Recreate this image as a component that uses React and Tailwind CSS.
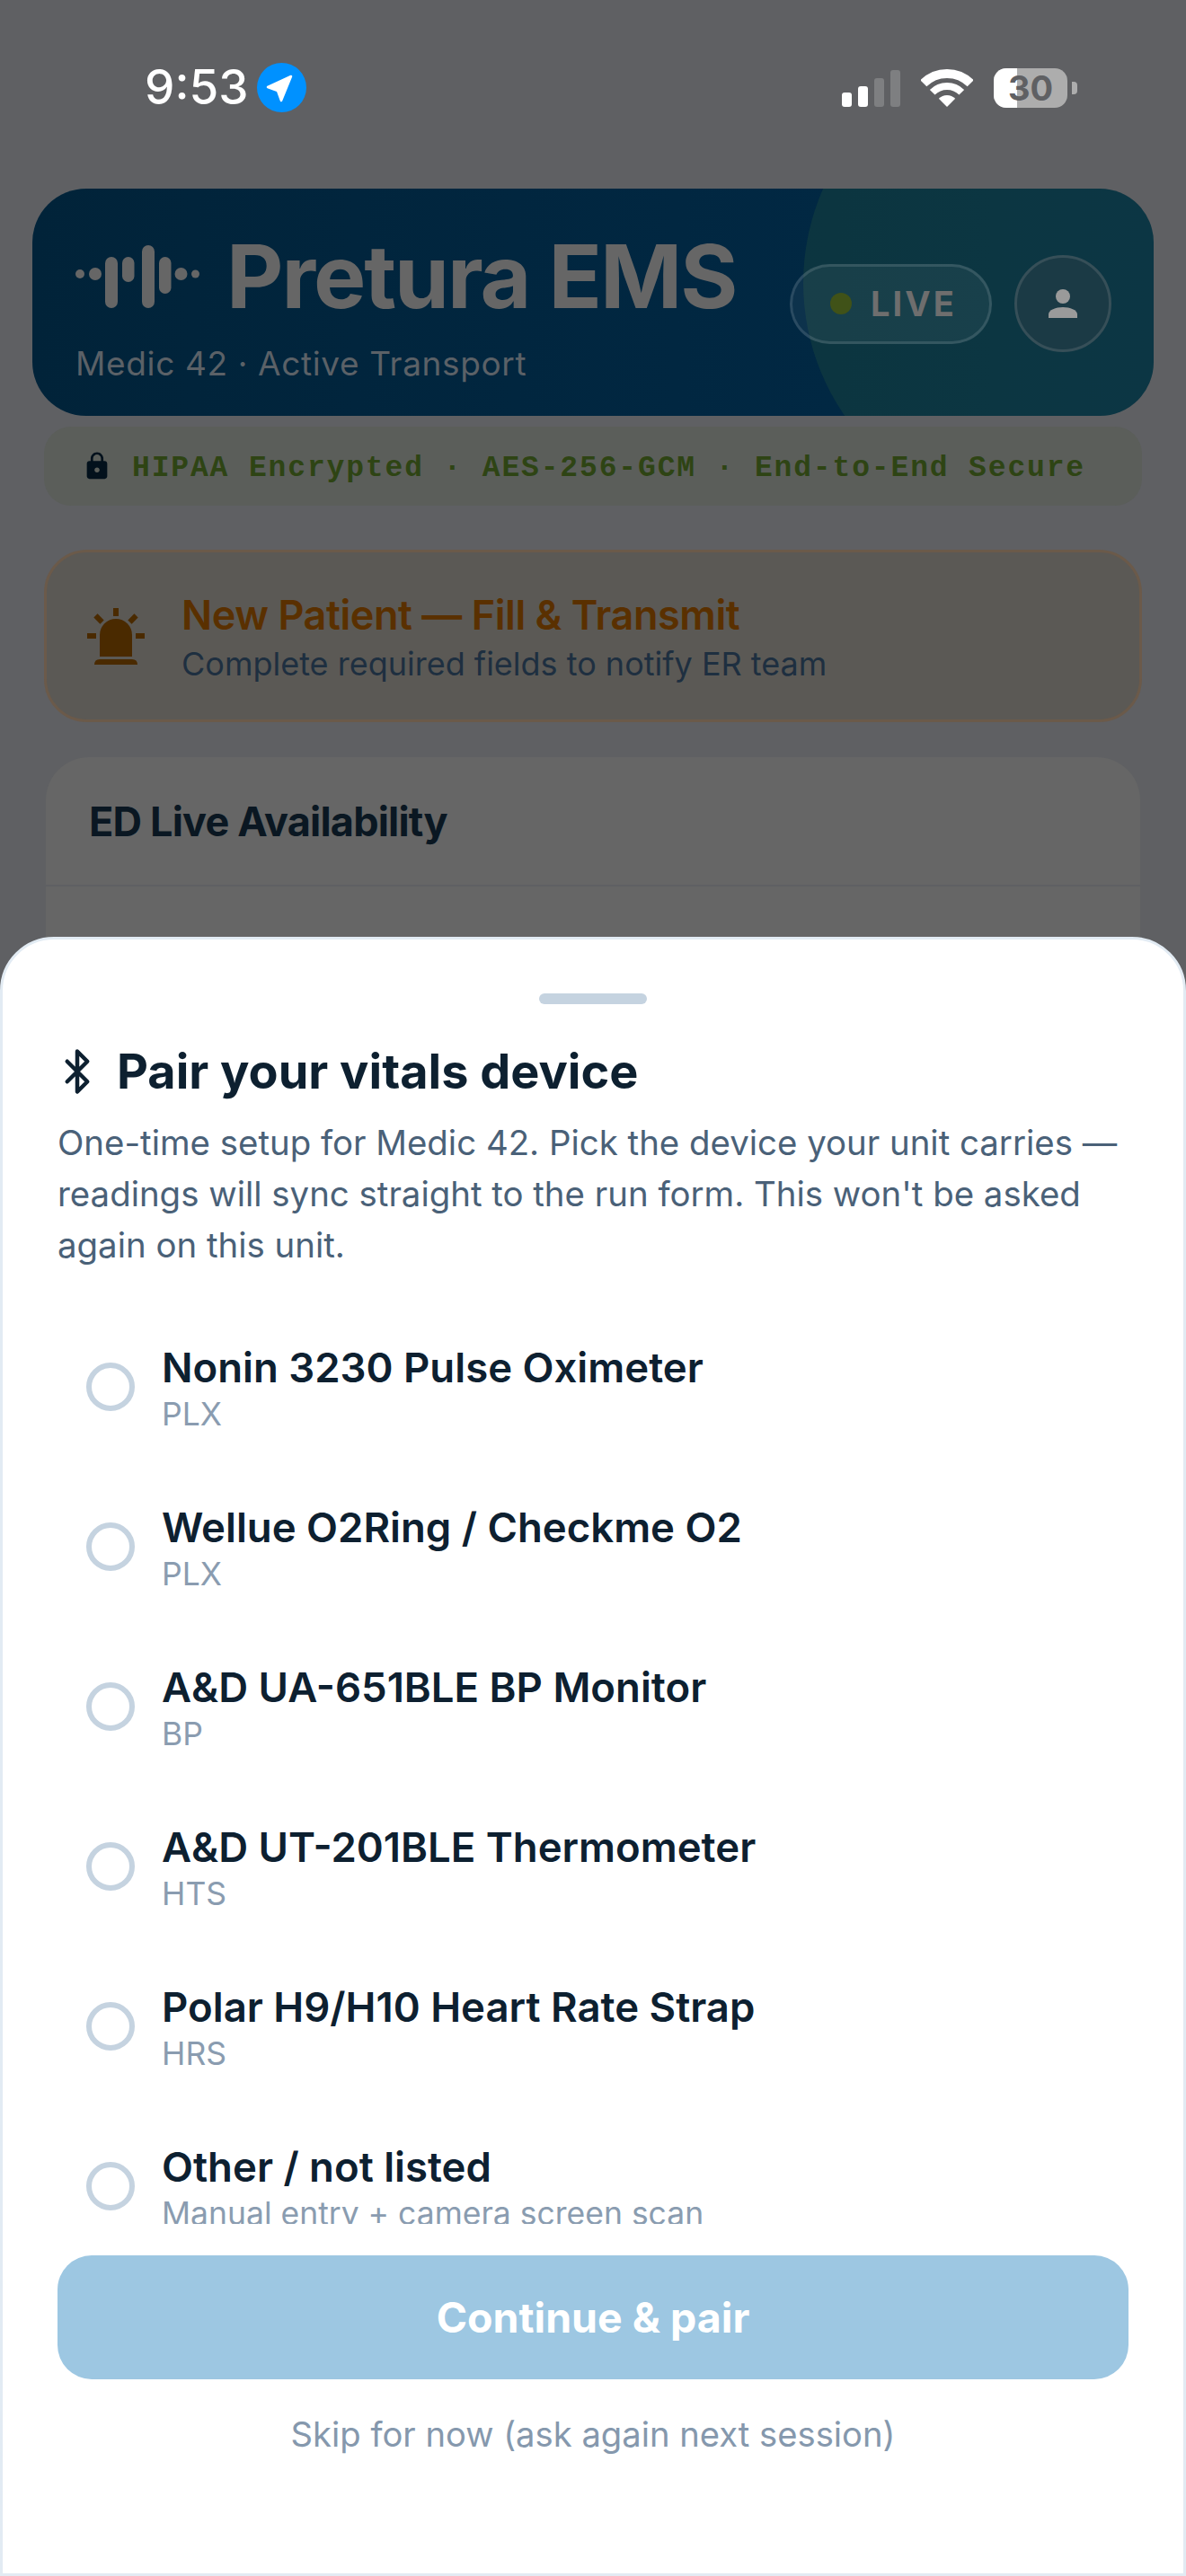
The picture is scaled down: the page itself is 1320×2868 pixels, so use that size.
import React from "react";
import { Bluetooth } from "lucide-react";

const devices = [
  ["Nonin 3230 Pulse Oximeter", "PLX"],
  ["Wellue O2Ring / Checkme O2", "PLX"],
  ["A&D UA-651BLE BP Monitor", "BP"],
  ["A&D UT-201BLE Thermometer", "HTS"],
  ["Polar H9/H10 Heart Rate Strap", "HRS"],
  ["Other / not listed", "Manual entry + camera screen scan"],
];

function StatusBar() {
  return (
    <div className="h-[210px] pt-[70px] pl-[161px] pr-[121px] flex items-start justify-between">
      <div className="flex items-center h-[55px] gap-[10px]">
        <span className="text-[53px] leading-[55px] font-medium text-white">9:53</span>
        <svg width="55" height="55" viewBox="0 0 55 55">
          <circle cx="27.5" cy="27.5" r="27.5" fill="#0091ff" />
          <path d="M12 27 L38 15 L27 42 L23 31 Z" fill="#fff" stroke="#fff" strokeWidth="2.5" strokeLinejoin="round" />
        </svg>
      </div>
      <div className="flex items-center h-[55px] gap-[23px]">
        <div className="flex items-end gap-[7px] h-[41px] mt-[2px]">
          <div className="w-[11px] h-[16px] rounded-[3px] bg-white" />
          <div className="w-[11px] h-[23px] rounded-[3px] bg-white" />
          <div className="w-[11px] h-[32px] rounded-[3px] bg-[#7e7f81]" />
          <div className="w-[11px] h-[41px] rounded-[3px] bg-[#7e7f81]" />
        </div>
        <svg width="58" height="43" viewBox="0 0 58 43" fill="none" stroke="#fff">
          <path d="M2.8 16.8 A37 37 0 0 1 55.2 16.8" strokeWidth="10" />
          <path d="M12.7 26.7 A23 23 0 0 1 45.3 26.7" strokeWidth="8" />
          <path d="M29 43 L19.8 33.8 A13 13 0 0 1 38.2 33.8 Z" fill="#fff" stroke="none" />
        </svg>
        <div className="flex items-center gap-[5px]">
          <div className="relative w-[82px] h-[44px] rounded-[14px] overflow-hidden bg-[#adadad]">
            <div className="w-[26px] h-full bg-white" />
            <span className="absolute inset-0 flex items-center justify-center text-[38px] leading-[44px] font-bold text-[#5f6063]">30</span>
          </div>
          <div className="w-[6px] h-[14px] rounded-r-[4px] bg-[#adadad]" />
        </div>
      </div>
    </div>
  );
}

function Logo() {
  return (
    <svg width="138" height="70" viewBox="0 0 138 70" fill="#666666">
      <circle cx="5" cy="32" r="5" />
      <circle cx="22" cy="32" r="7" />
      <rect x="33" y="13" width="14" height="57" rx="7" />
      <rect x="52" y="13" width="13.5" height="28" rx="6.75" />
      <rect x="74" y="0" width="14" height="70" rx="7" />
      <rect x="93" y="13" width="13.5" height="41" rx="6.75" />
      <circle cx="117.5" cy="32" r="7" />
      <circle cx="133.5" cy="32" r="4.5" />
    </svg>
  );
}

function Header() {
  return (
    <div className="relative mx-[36px] h-[253px] rounded-[60px] overflow-hidden bg-linear-to-r from-[#012339] to-[#012a47] flex items-center justify-between pl-[48px] pr-[47px]">
      <div className="absolute left-[858px] top-[-155px] w-[520px] h-[520px] rounded-full bg-[rgba(100,150,50,0.12)]" />
      <div className="relative self-start pt-[53px]">
        <div className="flex items-center h-[90px] gap-[30px]">
          <Logo />
          <span className="text-[98px] leading-[90px] font-bold tracking-[-0.021em] text-[#666666] whitespace-nowrap">Pretura EMS</span>
        </div>
        <div className="mt-[29px] text-[37px] leading-[46px] tracking-[0.017em] text-[#5b6167] whitespace-nowrap">Medic 42 · Active Transport</div>
      </div>
      <div className="relative flex items-center gap-[25px] mt-[3px]">
        <div className="w-[225px] h-[89px] rounded-full border-[3px] border-[rgba(255,255,255,0.12)] bg-[rgba(255,255,255,0.05)] flex items-center pl-[42px] gap-[21px]">
          <div className="w-[24px] h-[24px] rounded-full bg-[#405218]" />
          <span className="text-[38px] leading-[46px] font-bold tracking-[0.08em] text-[#6e6e6e]">LIVE</span>
        </div>
        <div className="w-[108px] h-[108px] rounded-full border-[3px] border-[#364f58] bg-[#1b3a45] flex items-center justify-center">
          <svg width="32" height="32" viewBox="0 0 32 32" fill="#9a9a9a">
            <circle cx="16" cy="8" r="8" />
            <path d="M0 32 V28 C0 23 8 20 16 20 C24 20 32 23 32 28 V32 Z" />
          </svg>
        </div>
      </div>
    </div>
  );
}

function Hipaa() {
  return (
    <div className="mx-[49px] mt-[12px] h-[88px] rounded-[30px] bg-[#5b5e5a] flex items-center pl-[42px] gap-[22px]">
      <svg width="34" height="34" viewBox="0 0 24 24" fill="#03111c">
        <path d="M18 8h-1V6c0-2.76-2.24-5-5-5S7 3.24 7 6v2H6c-1.1 0-2 .9-2 2v10c0 1.1.9 2 2 2h12c1.1 0 2-.9 2-2V10c0-1.1-.9-2-2-2zm-6 9c-1.1 0-2-.9-2-2s.9-2 2-2 2 .9 2 2-.9 2-2 2zm3.1-9H8.9V6c0-1.71 1.39-3.1 3.1-3.1 1.71 0 3.1 1.39 3.1 3.1v2z" />
      </svg>
      <span className="pt-[6px] font-['Liberation_Mono',monospace] font-bold text-[33px] leading-[40px] tracking-[1.85px] text-[#2e4414] whitespace-nowrap">
        HIPAA Encrypted · AES-256-GCM · End-to-End Secure
      </span>
    </div>
  );
}

function Banner() {
  return (
    <div className="mx-[49px] mt-[49px] h-[192px] rounded-[48px] border-[3px] border-[#6b5a4a] bg-[#5b5955] flex items-center pl-[45px] gap-[41px]">
      <svg width="64" height="63" viewBox="97 675 64 63" fill="#4a2a00">
        <path d="M111 729 V705 A18 18 0 0 1 147 705 V729 Z" />
        <path d="M105 738 Q105 732 111 732 H147 Q153 732 153 738 Z" />
        <rect x="126" y="675" width="6" height="9" />
        <rect x="97" y="703" width="10" height="6" />
        <rect x="151" y="703" width="10" height="6" />
        <rect x="105" y="684" width="10" height="6" transform="rotate(45 110 687)" />
        <rect x="143" y="684" width="10" height="6" transform="rotate(-45 148 687)" />
      </svg>
      <div className="pt-[3px]">
        <div className="text-[45px] leading-[56px] font-semibold tracking-[-0.01em] text-[#5a3000] whitespace-nowrap">New Patient — Fill &amp; Transmit</div>
        <div className="text-[36px] leading-[48px] mt-[2px] text-[#1e2f40] whitespace-nowrap">Complete required fields to notify ER team</div>
      </div>
    </div>
  );
}

function EdCard() {
  return (
    <div className="mx-[51px] mt-[39px] h-[400px] rounded-t-[48px] bg-[#666666]">
      <div className="h-[144px] border-b-[2px] border-[#5f6063] pl-[48px] pt-[2px] flex items-center">
        <span className="text-[45px] leading-[56px] font-bold tracking-[-0.018em] text-[#0a1722]">ED Live Availability</span>
      </div>
    </div>
  );
}

function DeviceRow({ name, sub }) {
  return (
    <div className="h-[178px] shrink-0 flex items-center pl-[32px] gap-[30px]">
      <div className="w-[54px] h-[54px] rounded-full border-[6px] border-[#c5d3e0] bg-white" />
      <div className="pt-[6px]">
        <div className="text-[45.5px] leading-[52px] font-semibold text-[#0d2030] whitespace-nowrap">{name}</div>
        <div className="text-[35.5px] leading-[44px] mt-[4px] text-[#8a9cb0] whitespace-nowrap">{sub}</div>
      </div>
    </div>
  );
}

function Sheet() {
  return (
    <div className="absolute left-0 right-0 bottom-0 top-[1043px] rounded-t-[60px] border-[3px] border-[#e2ebf3] bg-white flex flex-col px-[61px] pt-[60px]">
      <div className="w-[120px] h-[12px] rounded-[6px] bg-[#c5d3e0] self-center shrink-0" />
      <div className="mt-[44px] h-[62px] flex items-center gap-[17px] -ml-[5px] shrink-0">
        <Bluetooth size={54} strokeWidth={2} color="#0d2030" />
        <span className="text-[54px] leading-[62px] font-bold text-[#0d2030] whitespace-nowrap">Pair your vitals device</span>
      </div>
      <p className="mt-[20px] text-[38.4px] leading-[57px] text-[#4a6178] shrink-0">
        One-time setup for Medic 42. Pick the device your unit carries — readings will sync straight to the run form. This won't be asked again on this unit.
      </p>
      <div className="mt-[40px] h-[1021px] overflow-hidden shrink-0 flex flex-col">
        {devices.map(([n, s]) => (
          <DeviceRow key={n} name={n} sub={s} />
        ))}
      </div>
      <div className="mt-[35px] h-[138px] rounded-[38px] bg-[#9dc7e2] flex items-center justify-center shrink-0">
        <span className="text-[46.5px] leading-[56px] font-bold text-white">Continue &amp; pair</span>
      </div>
      <div className="mt-[38px] text-center text-[38.2px] leading-[46px] text-[#8598ad]">Skip for now (ask again next session)</div>
    </div>
  );
}

export default function App() {
  return (
    <div className="relative w-[1320px] h-[2868px] overflow-hidden bg-[#5f6063] font-['Inter',sans-serif]">
      <StatusBar />
      <Header />
      <Hipaa />
      <Banner />
      <EdCard />
      <Sheet />
    </div>
  );
}
